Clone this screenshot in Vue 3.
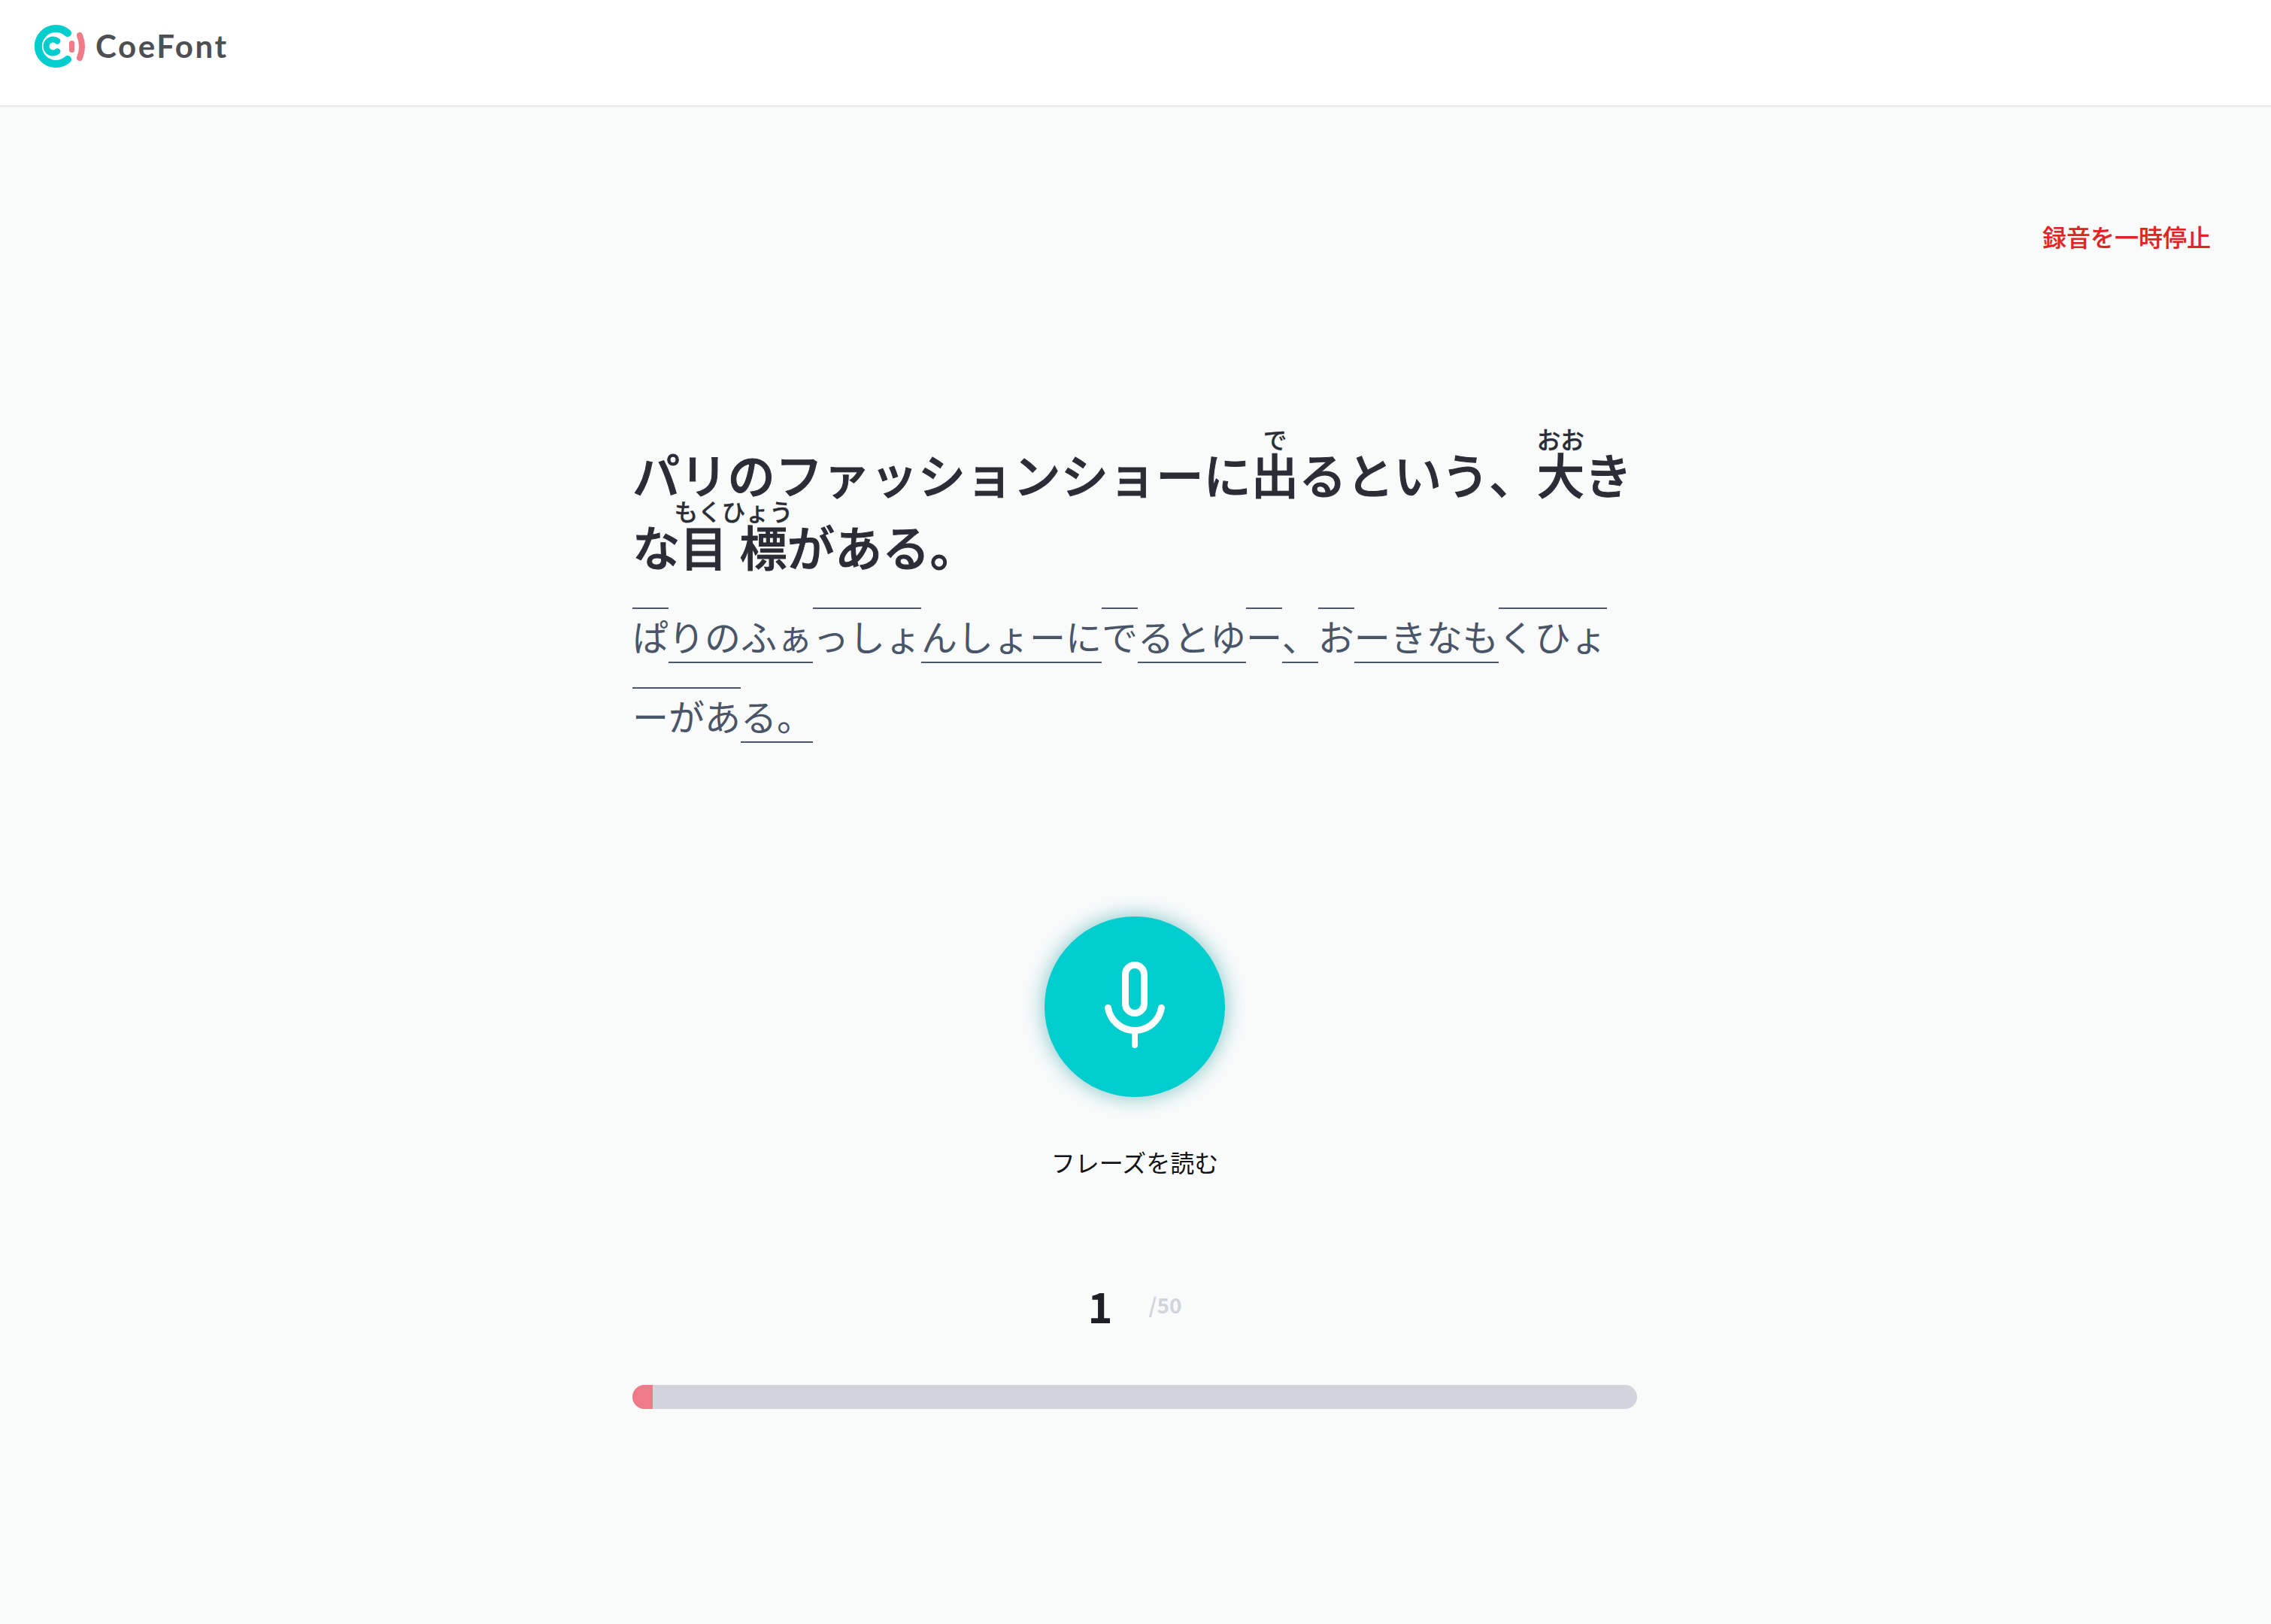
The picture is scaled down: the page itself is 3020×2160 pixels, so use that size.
<template>
  <div class="page">
    <header class="header">
      <div class="logo">
        <svg class="logoMark" width="70" height="60" viewBox="0 0 70 60">
          <path d="M46 13A23.500 23.500 0 1 0 46 48" fill="none" stroke="#00cdcd" stroke-width="10" stroke-linecap="round" />
          <path d="M32.300 23.600A9 9 0 1 0 32.300 37.400" fill="none" stroke="#00cdcd" stroke-width="8" stroke-linecap="round" />
          <line x1="51.500" y1="26.500" x2="51.500" y2="35.500" stroke="#ee7b87" stroke-width="7" stroke-linecap="round" />
          <path d="M62 16Q68 31 62 46" fill="none" stroke="#ee7b87" stroke-width="8" stroke-linecap="round" />
        </svg>
        <span class="logoText">CoeFont</span>
      </div>
    </header>

    <main class="main">
      <div class="pauseRow">
        <a class="pause">録音を一時停止</a>
      </div>

      <div class="content">
        <h1 class="phrase">
          パリのファッションショーに<ruby>出<rt>で</rt></ruby>るという、<ruby>大<rt>おお</rt></ruby>きな<ruby>目標<rt>もくひょう</rt></ruby>がある。
        </h1>

        <p class="reading"><span
          v-for="(seg, i) in segments"
          :key="i"
          :class="seg.high ? 'high' : 'low'"
        >{{ seg.text }}</span></p>

        <div class="recorder">
          <button class="micButton" type="button">
            <svg width="100" height="130" viewBox="0 0 100 130">
              <rect x="37.500" y="9.500" width="25" height="64" rx="12.500" fill="none" stroke="#fff" stroke-width="9" />
              <path d="M14.500 66.500A36 36 0 0 0 85.500 66.500" fill="none" stroke="#fff" stroke-width="9" stroke-linecap="round" />
              <line x1="50" y1="100" x2="50" y2="116" stroke="#fff" stroke-width="8" stroke-linecap="round" />
            </svg>
          </button>
          <div class="micLabel">フレーズを読む</div>
        </div>

        <div class="counter">
          <span class="current">1</span>
          <span class="total">/50</span>
        </div>

        <div class="track">
          <div class="fill" :style="{ width: progress + '%' }"></div>
        </div>
      </div>
    </main>
  </div>
</template>

<script setup>
const segments = [
  { text: 'ぱ', high: true },
  { text: 'りのふぁ', high: false },
  { text: 'っしょ', high: true },
  { text: 'んしょーに', high: false },
  { text: 'で', high: true },
  { text: 'るとゆ', high: false },
  { text: 'ー', high: true },
  { text: '、', high: false },
  { text: 'お', high: true },
  { text: 'ーきなも', high: false },
  { text: 'くひょ', high: true },
  { text: 'ーがあ', high: true },
  { text: 'る。', high: false }
]

const progress = (1 / 50) * 100
</script>

<style>
html, body {
  margin: 0;
  background: #f9fbfb;
}
</style>

<style scoped>
.page {
  min-height: 2160px;
  background: #f9fbfb;
  font-family: "Noto Sans CJK JP", "Noto Sans", sans-serif;
}

.header {
  height: 121px;
  padding: 0 0 19px 44px;
  display: flex;
  align-items: center;
  background: #fff;
  border-bottom: 2px solid #e8e9ea;
}

.logo {
  display: flex;
  align-items: center;
  gap: 13px;
}

.logoText {
  font-family: "Lato", sans-serif;
  font-size: 42px;
  font-weight: 700;
  letter-spacing: 2.6px;
  color: #4d4f52;
}

.main {
  display: flex;
  flex-direction: column;
}

.pauseRow {
  display: flex;
  justify-content: flex-end;
  padding: 148px 80px 0 0;
}

.pause {
  font-size: 32px;
  font-weight: 500;
  line-height: 48px;
  color: #e02424;
  -webkit-text-stroke: 0.2px #e02424;
}

.content {
  width: 1336px;
  margin-left: 841px;
  padding-top: 231px;
}

.phrase {
  margin: 0;
  font-size: 63.3px;
  font-weight: 500;
  line-height: 96px;
  color: #2a2d35;
  -webkit-text-stroke: 1px #2a2d35;
}

.phrase rt {
  -webkit-text-stroke: 0.3px #2a2d35;
}

.reading {
  margin: 18px 0 0;
  font-size: 48px;
  line-height: 106px;
  color: #4a5568;
}

.high {
  border-top: 2px solid #4a5568;
}

.low {
  border-bottom: 2px solid #4a5568;
}

.recorder {
  display: flex;
  flex-direction: column;
  align-items: center;
  margin-top: 215px;
}

.micButton {
  width: 240px;
  height: 240px;
  padding: 0;
  display: flex;
  align-items: center;
  justify-content: center;
  border: none;
  border-radius: 50%;
  background: #00cdcd;
  box-shadow: 0 0 28px rgba(0, 140, 145, 0.5);
}

.micLabel {
  margin-top: 62px;
  font-size: 32px;
  line-height: 48px;
  color: #111318;
}

.counter {
  display: flex;
  justify-content: center;
  align-items: center;
  gap: 48px;
  margin-top: 124px;
  height: 84px;
}

.current {
  font-size: 56px;
  font-weight: 700;
  color: #1d2026;
}

.total {
  font-size: 28px;
  font-weight: 700;
  color: #d1d5db;
}

.track {
  height: 32px;
  margin-top: 65px;
  border-radius: 16px;
  background: #d1d5db;
  overflow: hidden;
}

.fill {
  height: 100%;
  background: #ee7b87;
}
</style>
